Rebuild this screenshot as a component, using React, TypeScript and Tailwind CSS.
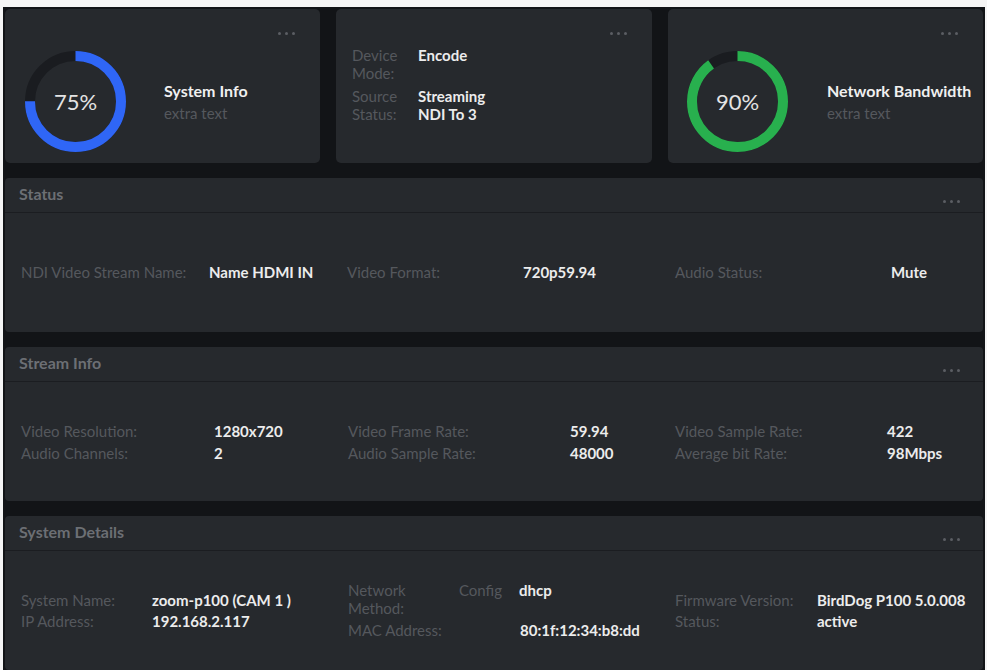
import React from "react";

const Dots = () => (
  <div className="flex gap-[4px]">
    <span className="w-[3px] h-[3px] rounded-full bg-[#5b5e63]" />
    <span className="w-[3px] h-[3px] rounded-full bg-[#5b5e63]" />
    <span className="w-[3px] h-[3px] rounded-full bg-[#5b5e63]" />
  </div>
);

const Ring = ({ pct, color }: { pct: number; color: string }) => {
  const r = 45.5;
  const c = 2 * Math.PI * r;
  return (
    <div className="relative w-[101px] h-[101px] shrink-0">
      <svg width="101" height="101" viewBox="0 0 101 101" className="-rotate-90">
        <circle cx="50.5" cy="50.5" r={r} fill="none" stroke="#1a1c20" strokeWidth="10" />
        <circle
          cx="50.5"
          cy="50.5"
          r={r}
          fill="none"
          stroke={color}
          strokeWidth="10"
          strokeDasharray={`${c * pct} ${c}`}
        />
      </svg>
      <div className="absolute inset-0 flex items-center justify-center text-[22px] text-[#e4e4e4]">
        {pct * 100}%
      </div>
    </div>
  );
};

const Label = ({ children, w }: { children: React.ReactNode; w: string }) => (
  <span className={`${w} shrink-0 text-[#55585d]`}>{children}</span>
);

const Value = ({ children }: { children: React.ReactNode }) => (
  <span className="font-bold text-[#ececec]">{children}</span>
);

const Section = ({ title, children }: { title: string; children: React.ReactNode }) => (
  <div className="h-[154px] bg-[#26292d] rounded-[4px] flex flex-col">
    <div className="h-[35px] shrink-0 border-b border-[#1b1d21] flex justify-between px-[14px]">
      <div className="pt-[4px] text-[16px] font-bold text-[#6c6f74]">{title}</div>
      <div className="self-end pb-[9px] pr-[9px]">
        <Dots />
      </div>
    </div>
    <div className="flex-1 flex items-center pl-[16px] text-[15px]">{children}</div>
  </div>
);

export default function App() {
  return (
    <div className="w-[987px] h-[670px] bg-[#f5f5f5] pt-[7px] pl-[3px] pr-[2px] overflow-hidden font-['Lato',sans-serif]">
      <div className="h-full bg-[#121417] px-[2px] pt-[2px] flex flex-col gap-[15px]">
        {/* top cards */}
        <div className="grid grid-cols-[315px_316px_1fr] gap-[16px] h-[154px]">
          <div className="relative bg-[#26292d] rounded-[5px] flex items-center pl-[20px] pt-[30px]">
            <div className="absolute top-[23px] right-[25px]">
              <Dots />
            </div>
            <Ring pct={0.75} color="#2f66f6" />
            <div className="ml-[38px] pt-[4px]">
              <div className="text-[16px] font-bold text-[#f0f0f0] leading-[20px]">System Info</div>
              <div className="text-[15px] text-[#55585d] leading-[24px]">extra text</div>
            </div>
          </div>

          <div className="relative bg-[#26292d] rounded-[5px] pl-[16px] pt-[37px] text-[15px] leading-[18px]">
            <div className="absolute top-[23px] right-[25px]">
              <Dots />
            </div>
            <div className="flex">
              <Label w="w-[66px] pr-[10px]">Device Mode:</Label>
              <Value>Encode</Value>
            </div>
            <div className="flex mt-[5px]">
              <Label w="w-[66px] pr-[10px]">Source Status:</Label>
              <Value>
                Streaming
                <br />
                NDI To 3
              </Value>
            </div>
          </div>

          <div className="relative bg-[#26292d] rounded-[5px] flex items-center pl-[19px] pt-[30px]">
            <div className="absolute top-[23px] right-[25px]">
              <Dots />
            </div>
            <Ring pct={0.9} color="#28b04e" />
            <div className="ml-[39px] pt-[4px]">
              <div className="text-[16px] font-bold text-[#f0f0f0] leading-[20px]">Network Bandwidth</div>
              <div className="text-[15px] text-[#55585d] leading-[24px]">extra text</div>
            </div>
          </div>
        </div>

        <Section title="Status">
          <div className="grid grid-cols-[326px_328px_1fr] w-full">
            <div className="flex">
              <Label w="w-[188px]">NDI Video Stream Name:</Label>
              <Value>Name HDMI IN</Value>
            </div>
            <div className="flex">
              <Label w="w-[176px]">Video Format:</Label>
              <Value>720p59.94</Value>
            </div>
            <div className="flex">
              <Label w="w-[216px]">Audio Status:</Label>
              <Value>Mute</Value>
            </div>
          </div>
        </Section>

        <Section title="Stream Info">
          <div className="grid grid-cols-[327px_327px_1fr] w-full leading-[22px]">
            <div>
              <div className="flex">
                <Label w="w-[193px]">Video Resolution:</Label>
                <Value>1280x720</Value>
              </div>
              <div className="flex">
                <Label w="w-[193px]">Audio Channels:</Label>
                <Value>2</Value>
              </div>
            </div>
            <div>
              <div className="flex">
                <Label w="w-[222px]">Video Frame Rate:</Label>
                <Value>59.94</Value>
              </div>
              <div className="flex">
                <Label w="w-[222px]">Audio Sample Rate:</Label>
                <Value>48000</Value>
              </div>
            </div>
            <div>
              <div className="flex">
                <Label w="w-[212px]">Video Sample Rate:</Label>
                <Value>422</Value>
              </div>
              <div className="flex">
                <Label w="w-[212px]">Average bit Rate:</Label>
                <Value>98Mbps</Value>
              </div>
            </div>
          </div>
        </Section>

        <Section title="System Details">
          <div className="grid grid-cols-[327px_327px_1fr] w-full items-center">
            <div className="leading-[21px]">
              <div className="flex">
                <Label w="w-[131px]">System Name:</Label>
                <Value>zoom-p100 (CAM 1 )</Value>
              </div>
              <div className="flex">
                <Label w="w-[131px]">IP Address:</Label>
                <Value>192.168.2.117</Value>
              </div>
            </div>
            <div className="leading-[18px] pb-[2px]">
              <div className="flex">
                <Label w="w-[111px] pr-[36px]">Network Method:</Label>
                <Label w="w-[60px]">Config</Label>
                <Value>dhcp</Value>
              </div>
              <div className="flex mt-[4px]">
                <Label w="w-[172px]">MAC Address:</Label>
                <Value>80:1f:12:34:b8:dd</Value>
              </div>
            </div>
            <div className="leading-[21px]">
              <div className="flex">
                <Label w="w-[142px]">Firmware Version:</Label>
                <Value>BirdDog P100 5.0.008</Value>
              </div>
              <div className="flex">
                <Label w="w-[142px]">Status:</Label>
                <Value>active</Value>
              </div>
            </div>
          </div>
        </Section>
      </div>
    </div>
  );
}
